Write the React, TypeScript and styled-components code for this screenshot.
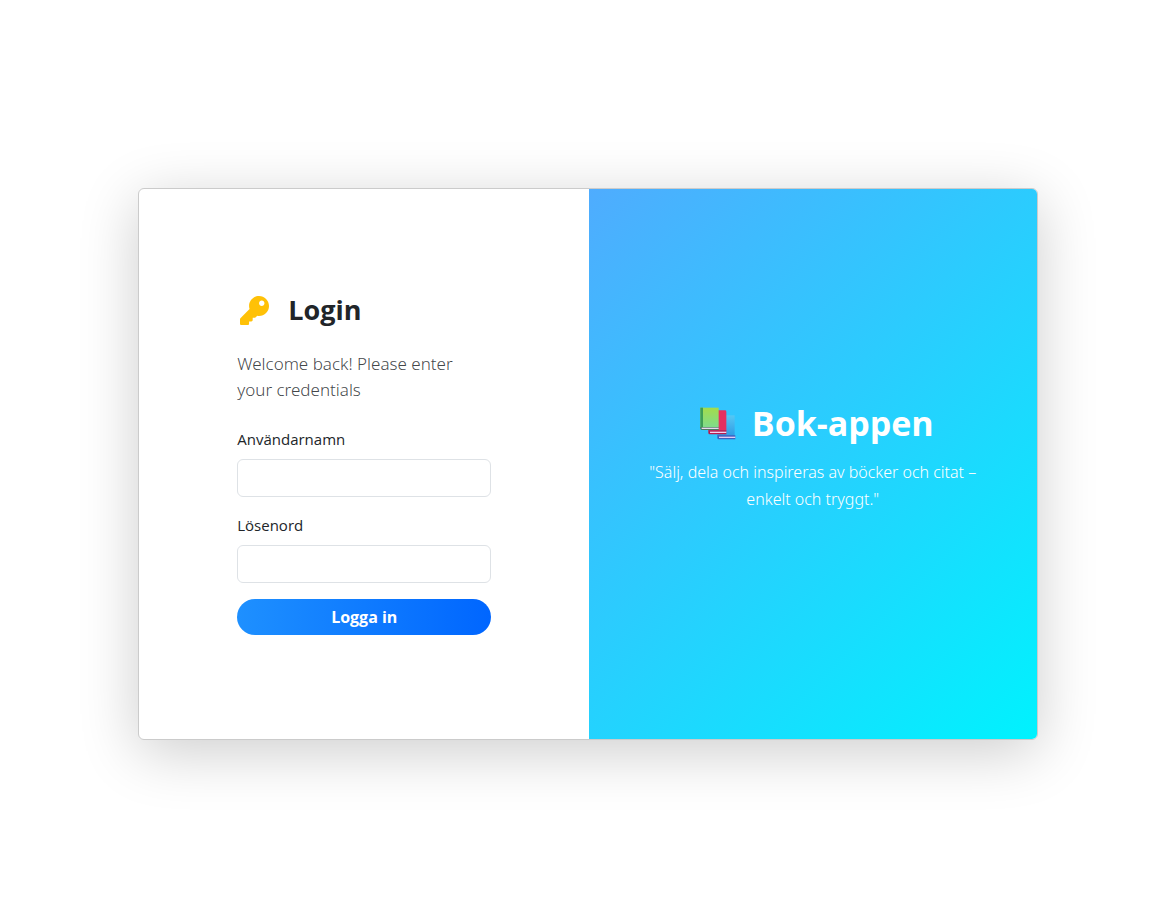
import React from "react";
import styled, { createGlobalStyle } from "styled-components";
import { FaKey } from "react-icons/fa";

const GlobalStyle = createGlobalStyle`
  *, *::before, *::after { box-sizing: border-box; }
  body {
    margin: 0;
    background: #fff;
    color: #212529;
    font-family: "Segoe UI", "Open Sans", "Noto Sans", sans-serif;
    font-size: 15px;
    line-height: 24px;
  }
`;

const Page = styled.main`
  display: flex;
  align-items: center;
  justify-content: center;
  min-height: 100vh;
  padding: 22px 0 0 5px;
`;

const Card = styled.div`
  display: grid;
  grid-template-columns: 1fr 1fr;
  width: 100%;
  max-width: 900px;
  min-height: 552px;
  padding-left: 1px;
  overflow: hidden;
  background: #fff;
  border: 1px solid #cbcbcb;
  border-radius: 6px;
  box-shadow: 0 12px 60px rgba(0, 0, 0, 0.2);
`;

const FormPanel = styled.section`
  display: flex;
  align-items: center;
  justify-content: center;
`;

const Form = styled.form`
  display: flex;
  flex-direction: column;
  width: 254px;
`;

const Title = styled.h1`
  display: flex;
  align-items: center;
  gap: 19px;
  margin: 0 0 24px;
  padding-left: 3px;
  font-size: 27px;
  font-weight: 700;
  line-height: 34px;
`;

const Intro = styled.p`
  margin: 0 0 24px;
  padding-right: 16px;
  color: rgba(33, 37, 41, 0.85);
  font-family: "Segoe UI", "Noto Sans", sans-serif;
  font-size: 17px;
  font-weight: 300;
  line-height: 26px;
`;

const Field = styled.div`
  display: flex;
  flex-direction: column;
  gap: 8px;
  margin-bottom: 16px;
`;

const Input = styled.input`
  width: 100%;
  height: 38px;
  padding: 6px 12px;
  background: #fff;
  border: 1px solid #dee2e6;
  border-radius: 6px;
  color: inherit;
  font: inherit;
`;

const SubmitButton = styled.button`
  height: 36px;
  padding: 0 12px;
  border: 0;
  border-radius: 18px;
  background: linear-gradient(to right, #1e90ff, #0066ff);
  color: #fff;
  font: inherit;
  font-size: 16px;
  font-weight: 700;
  cursor: pointer;
`;

const BrandPanel = styled.section`
  display: flex;
  flex-direction: column;
  align-items: center;
  justify-content: center;
  padding: 48px;
  background: linear-gradient(135deg, #4facfe, #00f2fe);
  color: #fff;
  text-align: center;
`;

const BrandTitle = styled.h2`
  display: flex;
  align-items: center;
  gap: 16px;
  margin: 0 0 14px;
  padding-left: 8px;
  font-size: 34px;
  font-weight: 700;
  line-height: 44px;
`;

const Tagline = styled.p`
  margin: 0 0 14px;
  font-family: "Segoe UI", "Noto Sans", sans-serif;
  font-size: 16px;
  font-weight: 300;
  line-height: 27px;
`;

function BooksIcon() {
  return (
    <svg width="36" height="33" viewBox="0 0 108 99" aria-hidden="true">
      <defs>
        <linearGradient id="green" x1="0" y1="0" x2="0" y2="1">
          <stop offset="0" stopColor="#a3dc4c" />
          <stop offset="1" stopColor="#7fdc8a" />
        </linearGradient>
        <linearGradient id="blue" x1="0" y1="0" x2="0" y2="1">
          <stop offset="0" stopColor="#55c8f5" />
          <stop offset="1" stopColor="#2f9be4" />
        </linearGradient>
      </defs>
      <path d="M52 25h52v62H52z" fill="url(#blue)" />
      <path d="M52 85h54v12H56q-4 0-4-5z" fill="#3d5fc0" />
      <path d="M57 89h49v4H57z" fill="#e2ccf2" />
      <path d="M25 10h50q4 0 4 4v57H25z" fill="#e5305f" />
      <path d="M25 70h54v12H29q-4 0-4-5z" fill="#b81c50" />
      <path d="M30 74h49v4H30z" fill="#f0d2ef" />
      <path d="M1 2h55v58H1z" fill="url(#green)" />
      <path d="M1 2h8v62H1z" fill="#3d9e57" />
      <path d="M1 60h55v9H5q-4 0-4-5z" fill="#4b7b5e" />
      <path d="M5 62h51v4H5z" fill="#e8d8f0" />
    </svg>
  );
}

export default function App() {
  return (
    <>
      <GlobalStyle />
      <Page>
        <Card>
          <FormPanel>
            <Form onSubmit={(event: React.FormEvent) => event.preventDefault()}>
              <Title>
                <FaKey size={29} color="#ffc107" aria-hidden="true" />
                Login
              </Title>
              <Intro>Welcome back! Please enter your credentials</Intro>
              <Field>
                <label htmlFor="username">Användarnamn</label>
                <Input id="username" type="text" autoComplete="username" />
              </Field>
              <Field>
                <label htmlFor="password">Lösenord</label>
                <Input id="password" type="password" autoComplete="current-password" />
              </Field>
              <SubmitButton type="submit">Logga in</SubmitButton>
            </Form>
          </FormPanel>
          <BrandPanel>
            <BrandTitle>
              <BooksIcon />
              Bok-appen
            </BrandTitle>
            <Tagline>"Sälj, dela och inspireras av böcker och citat – enkelt och tryggt."</Tagline>
          </BrandPanel>
        </Card>
      </Page>
    </>
  );
}
